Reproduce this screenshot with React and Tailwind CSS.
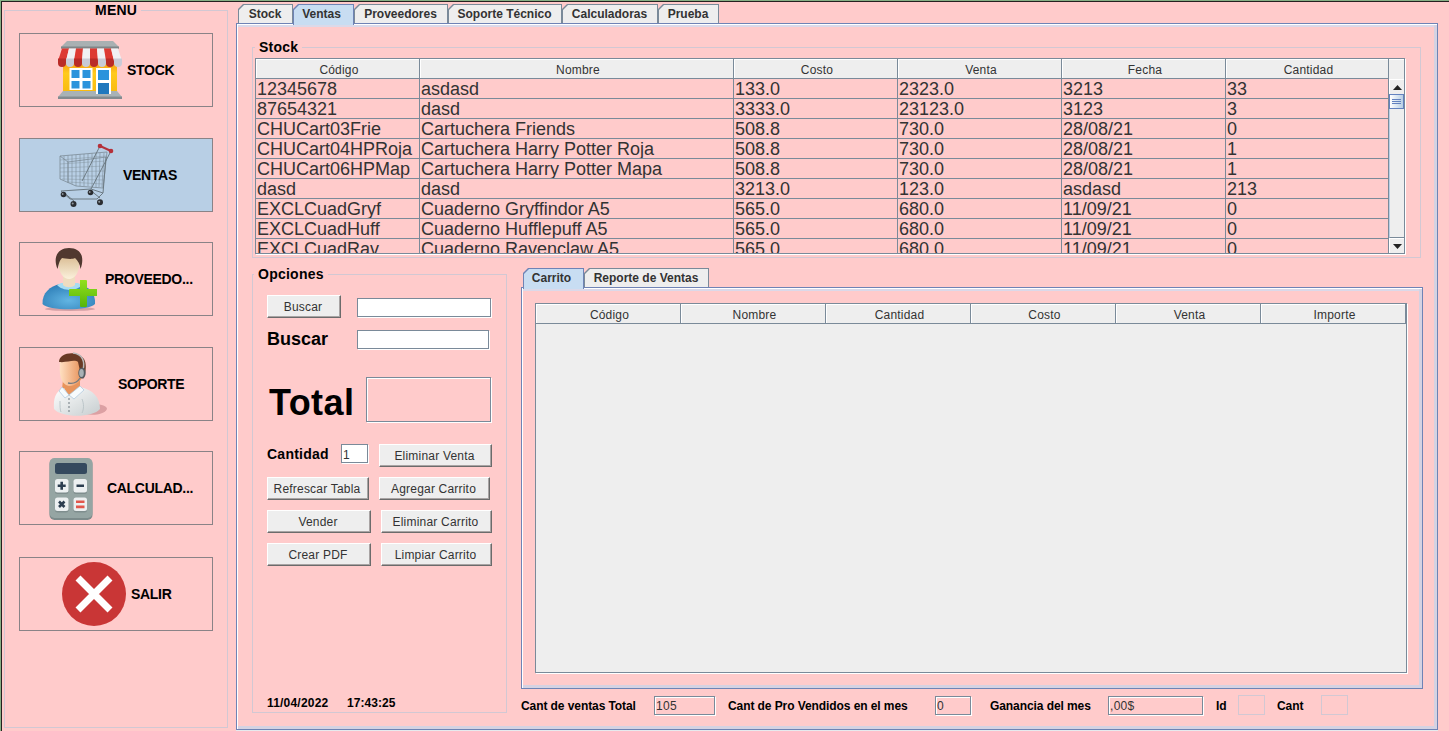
import React from "react";

const FONT = "font-['Liberation_Sans',Arial,sans-serif]";

function ShopIcon() {
  const stripes = ["#dd3a33", "#f1f1f4"];
  const caps = ["#b92b27", "#c9cbd6"];
  return (
    <svg width="64" height="64" viewBox="0 0 64 64">
      <defs>
        <linearGradient id="shopWall" x1="0" y1="0" x2="0" y2="1">
          <stop offset="0" stopColor="#f59a12" />
          <stop offset="0.35" stopColor="#ffca1c" />
          <stop offset="1" stopColor="#f8b90f" />
        </linearGradient>
      </defs>
      <rect x="5" y="24" width="54" height="32" fill="url(#shopWall)" />
      <path d="M5 53H59L64 59H0Z" fill="#a8b2b6" />
      <rect x="0" y="58.500" width="64" height="2.500" fill="#828b90" />
      <rect x="11.500" y="30" width="23" height="22" fill="#fff" />
      <g fill="#2b93dc">
        <rect x="13.500" y="32" width="8" height="8" />
        <rect x="24.500" y="32" width="8" height="8" />
        <rect x="13.500" y="43" width="8" height="7.500" />
        <rect x="24.500" y="43" width="8" height="7.500" />
      </g>
      <rect x="38" y="30" width="15" height="26" fill="#fff" />
      <rect x="40" y="32" width="11" height="10" fill="#2b93dc" />
      <rect x="40" y="45" width="11" height="11" fill="#1f78be" />
      <path d="M9 3H55L61 9H3Z" fill="#a9b0b2" />
      <rect x="3" y="8.500" width="58" height="2.200" fill="#7f8688" />
      {[0, 1, 2, 3, 4, 5, 6, 7].map((i) => {
        const t0 = 4 + i * 7;
        const b0 = i * 8;
        return (
          <g key={i}>
            <path d={`M${t0} 10.500H${t0 + 7}L${b0 + 8} 23H${b0}Z`} fill={stripes[i % 2]} />
            <path d={`M${b0} 20.500H${b0 + 8}V25A4 4 0 0 1 ${b0} 25Z`} fill={caps[i % 2]} />
          </g>
        );
      })}
    </svg>
  );
}

function CartIcon() {
  return (
    <svg width="64" height="64" viewBox="0 0 64 64" fill="none">
      <g stroke="#7b8a95" strokeWidth=".8">
        <path d="M6 13L53 9L49 45L22 43L6 36Z" />
        <path d="M6 17L52 13M6 21L52 18M6 25L51 23M6 29L51 28M6 33L50 33M8 36L50 37M14 39L49 41" strokeWidth=".4" />
        <path d="M10 13V37M14 12.500V39M18 12V41M22 12V43M26 11.500V43M30 11V43M34 11V43M38 10.500V44M42 10V44M46 10L45 44M50 10L48 44" strokeWidth=".6" />
        <path d="M6 13L14 19V40M14 19L52 14" strokeWidth=".8" />
      </g>
      <g stroke="#6c7a83" strokeWidth="1">
        <path d="M46 3L28 38M57 8L37 46" />
        <path d="M52 14L49 50L43 56H16L7 48L37 46L49 50" />
        <path d="M9 49L20 58M36 47L46 55" />
      </g>
      <path d="M45 2.500L57 8" stroke="#b3333c" strokeWidth="2" />
      <circle cx="46" cy="3" r="2.300" fill="#b5303a" />
      <circle cx="57" cy="8" r="2.300" fill="#b5303a" />
      <g fill="#2b2d31">
        <circle cx="9.500" cy="51.500" r="2.800" />
        <circle cx="36.500" cy="49.500" r="2.800" />
        <circle cx="19.500" cy="61" r="3" />
        <circle cx="46" cy="59.300" r="3" />
      </g>
      <g fill="#8f979d">
        <circle cx="8.700" cy="51" r=".9" />
        <circle cx="35.700" cy="49" r=".9" />
        <circle cx="18.700" cy="60.500" r="1" />
        <circle cx="45.200" cy="58.800" r="1" />
      </g>
    </svg>
  );
}

function UserAddIcon() {
  return (
    <svg width="64" height="64" viewBox="0 0 64 64">
      <defs>
        <radialGradient id="uaBody" cx=".5" cy=".65" r=".65">
          <stop offset="0" stopColor="#62b5e3" />
          <stop offset="1" stopColor="#2f7fb8" />
        </radialGradient>
        <linearGradient id="uaFace" x1="0" y1="0" x2="0" y2="1">
          <stop offset="0" stopColor="#d9bb92" />
          <stop offset="1" stopColor="#fbf1dc" />
        </linearGradient>
        <linearGradient id="uaPlus" x1="0" y1="0" x2="0" y2="1">
          <stop offset="0" stopColor="#93e01c" />
          <stop offset="1" stopColor="#55b40c" />
        </linearGradient>
      </defs>
      <ellipse cx="33" cy="62" rx="25" ry="2" fill="#d3a0a5" />
      <path d="M5.500 57C5 46 13 39 23 37H41C51 39 59 46 58 57C52 64 11 64 5.500 57Z" fill="url(#uaBody)" />
      <path d="M20 38C25 44 39 45 45 38L41 36H24Z" fill="#a8dcf2" />
      <path d="M26 28H38V38C35 41 29 41 26 38Z" fill="#efdcc0" />
      <path d="M21.500 14C21.500 27 27 32 32 32C37 32 42.500 27 42.500 14C40 7 24 7 21.500 14Z" fill="url(#uaFace)" />
      <path d="M20.500 22C15.500 10 21 1 32 1C44 1 48 10 43.500 22C43 17 41 14 38 11C34 13 27 11 25 11C22 14 22 17 20.500 22Z" fill="#50382f" />
      <path d="M43 33H49Q50 33 50 34V42H60V49H50V59Q50 60 49 60H44Q43 60 43 59V49H32V43Q32 42 33 42H43Z" fill="url(#uaPlus)" />
    </svg>
  );
}

function SupportIcon() {
  return (
    <svg width="64" height="64" viewBox="0 0 64 64">
      <defs>
        <linearGradient id="spFace" x1="0" y1="0" x2="1" y2="0">
          <stop offset="0" stopColor="#ffe0c2" />
          <stop offset="1" stopColor="#e58a50" />
        </linearGradient>
        <linearGradient id="spShirt" x1="0" y1="0" x2="1" y2="1">
          <stop offset="0" stopColor="#fff" />
          <stop offset="1" stopColor="#c6cdcf" />
        </linearGradient>
      </defs>
      <path d="M38 53C48 51 58 53 58 57C56 62 45 64 36 62Z" fill="#dca0a3" />
      <path d="M14 28H31V40L20 45L13 37Z" fill="#e8945c" />
      <path d="M5 57C4 45 8 38 15 36L20 44L31 35C44 38 51 45 51 57C44 66 12 66 5 57Z" fill="url(#spShirt)" />
      <path d="M13 35L20 43L16 46L10 39ZM31 34L20 43L25 47L35 38Z" fill="#f7fbfd" stroke="#aac6dc" strokeWidth=".7" />
      <path d="M33 47C35 52 35 57 33 61M11 49C11 54 11 58 12 60" stroke="#b4bfc3" strokeWidth=".8" fill="none" />
      <path d="M11 9C10 22 11 32 20 34C27 34 34 29 35 18L33 7C25 1 15 3 11 9Z" fill="url(#spFace)" />
      <path d="M10 10C10 0 29-2 35 7C38 12 37 21 34 27L31 19L29 10C25 7 18 11 10 10Z" fill="#693a25" />
      <path d="M24 1C34 2 36 10 34 18" stroke="#b9b9b9" strokeWidth="1.500" fill="none" />
      <ellipse cx="33" cy="21" rx="3.700" ry="5.500" fill="#555b60" />
      <ellipse cx="32.500" cy="21" rx="2.300" ry="4" fill="#a9b1b5" />
      <path d="M31 26C28 31 24 32 19 31" stroke="#747b80" strokeWidth="1.300" fill="none" />
      <g fill="#5d6972">
        <circle cx="20" cy="47" r=".8" />
        <circle cx="20" cy="51" r=".8" />
        <circle cx="20" cy="55" r=".8" />
        <circle cx="20" cy="59" r=".8" />
      </g>
    </svg>
  );
}

function CalculatorIcon() {
  return (
    <svg width="64" height="64" viewBox="0 0 64 64">
      <rect x="10.500" y="3" width="43" height="61" rx="5" fill="#7c8b8b" />
      <rect x="10.500" y="2" width="43" height="60" rx="5" fill="#95a5a3" />
      <rect x="16" y="7" width="32" height="11" rx="2.500" fill="#34495e" />
      <g fill="#7f8e8e">
        <rect x="16" y="25" width="13.500" height="13" rx="2.500" />
        <rect x="34.500" y="25" width="13.500" height="13" rx="2.500" />
        <rect x="16" y="43.500" width="13.500" height="13" rx="2.500" />
        <rect x="34.500" y="43.500" width="13.500" height="13" rx="2.500" />
      </g>
      <g fill="#ecf0f1">
        <rect x="16" y="23" width="13.500" height="13.500" rx="2.500" />
        <rect x="34.500" y="23" width="13.500" height="13.500" rx="2.500" />
        <rect x="16" y="41.500" width="13.500" height="13.500" rx="2.500" />
        <rect x="34.500" y="41.500" width="13.500" height="13.500" rx="2.500" />
      </g>
      <path d="M22.700 25.700V33.700M18.700 29.700H26.700M37.500 29.700H45M20 45.500L25.500 51M25.500 45.500L20 51" stroke="#2c3e50" strokeWidth="2.600" />
      <path d="M37 45.700H45.500M37 50.900H45.500" stroke="#e2574c" strokeWidth="2.600" />
    </svg>
  );
}

function CloseIcon() {
  return (
    <svg width="64" height="64" viewBox="0 0 64 64">
      <circle cx="32" cy="32" r="32" fill="#c93636" />
      <path d="M16 16L48 48M48 16L16 48" stroke="#fff" strokeWidth="7" />
    </svg>
  );
}

const MENU = [
  { label: "STOCK", Icon: ShopIcon, cls: "mt-[22px] pl-[38px] gap-[5px]" },
  { label: "VENTAS", Icon: CartIcon, cls: "mt-[31px] pl-[34px] gap-[5px] bg-[#b8cfe5]" },
  { label: "PROVEEDO...", Icon: UserAddIcon, cls: "mt-[30px] pl-[17px] gap-1" },
  { label: "SOPORTE", Icon: SupportIcon, cls: "mt-[31px] pl-[29px] gap-[5px]" },
  { label: "CALCULAD...", Icon: CalculatorIcon, cls: "mt-[30px] pl-[19px] gap-1" },
  { label: "SALIR", Icon: CloseIcon, cls: "mt-[32px] pl-[42px] gap-[5px]" },
];

function Tab({ label, width, active }) {
  const clip = "[clip-path:polygon(5px_0,100%_0,100%_100%,0_100%,0_5px)]";
  return (
    <div
      className={`${width} ${clip} shrink-0 px-px pt-px ${active ? "relative z-10 h-[21px] bg-[#6f83b5]" : "h-[19px] bg-[#7a8a99]"}`}
    >
      <div
        className={`${clip} flex h-full items-start justify-center pt-0.5 text-[12px] leading-[15px] font-bold whitespace-nowrap text-[#333] ${active ? "bg-[#c8ddf2] pr-1" : "bg-[#eee] pr-px"}`}
      >
        {label}
      </div>
    </div>
  );
}

function Title({ children, className }) {
  return (
    <div className={`w-fit bg-[#ffcbcb] px-1 text-[14px] leading-[16px] font-bold tracking-[.25px] ${className}`}>{children}</div>
  );
}

function Field({ children, className }) {
  return (
    <div
      className={`flex shrink-0 items-center border border-[#7a8a99] pt-0.5 pl-px text-[12px] leading-none tracking-[.3px] text-[#333] shadow-[1px_1px_0_#fff,inset_1px_1px_0_#fff] ${className}`}
    >
      {children}
    </div>
  );
}

function Button({ children, className }) {
  return (
    <button
      className={`flex h-[23px] shrink-0 items-center justify-center border border-t-white border-l-white border-r-[#6b6b6b] border-b-[#6b6b6b] bg-[#eee] pt-px pr-0.5 text-[12px] leading-none tracking-[.2px] whitespace-nowrap text-[#333] shadow-[inset_-1px_-1px_0_#a9a4a4] ${className}`}
    >
      {children}
    </button>
  );
}

const STOCK_COLS = "grid grid-cols-[164px_314px_164px_164px_164px_163px]";
const STOCK = [
  ["12345678", "asdasd", "133.0", "2323.0", "3213", "33"],
  ["87654321", "dasd", "3333.0", "23123.0", "3123", "3"],
  ["CHUCart03Frie", "Cartuchera Friends", "508.8", "730.0", "28/08/21", "0"],
  ["CHUCart04HPRoja", "Cartuchera Harry Potter Roja", "508.8", "730.0", "28/08/21", "1"],
  ["CHUCart06HPMap", "Cartuchera Harry Potter Mapa", "508.8", "730.0", "28/08/21", "1"],
  ["dasd", "dasd", "3213.0", "123.0", "asdasd", "213"],
  ["EXCLCuadGryf", "Cuaderno Gryffindor A5", "565.0", "680.0", "11/09/21", "0"],
  ["EXCLCuadHuff", "Cuaderno Hufflepuff A5", "565.0", "680.0", "11/09/21", "0"],
  ["EXCLCuadRav", "Cuaderno Ravenclaw A5", "565.0", "680.0", "11/09/21", "0"],
];

function HeaderCell({ children }) {
  return (
    <div className="flex h-5 items-center justify-center border-r border-b border-[#7a8a99] bg-[#eee] pt-0.5 pl-[3px] text-[12px] leading-none tracking-[.2px] text-[#333] shadow-[inset_1px_1px_0_#fff]">
      {children}
    </div>
  );
}

function ScrollBar() {
  return (
    <div className="flex w-[15px] flex-col bg-[#eee]">
      <div className="h-5 shadow-[inset_0_1px_0_#fff]" />
      <div className="flex h-[15px] items-center justify-center border-t border-l border-white">
        <svg width="9" height="5" viewBox="0 0 9 5"><path d="M0 5L4.500 0L9 5Z" fill="#222" /></svg>
      </div>
      <div className="flex h-[15px] flex-col items-center justify-center gap-px border border-[#6382bf] bg-linear-to-r from-white to-[#b8cfe5]">
        <div className="h-px w-[9px] bg-[#6382bf]" />
        <div className="h-px w-[9px] bg-[#6382bf]" />
        <div className="h-px w-[9px] bg-[#6382bf]" />
      </div>
      <div className="flex-1 border-b border-l border-b-[#7a8a99] border-l-[#b8cfe5]" />
      <div className="flex h-[15px] items-center justify-center border-t border-l border-white">
        <svg width="9" height="5" viewBox="0 0 9 5"><path d="M0 0L4.500 5L9 0Z" fill="#222" /></svg>
      </div>
    </div>
  );
}

function StockTable() {
  return (
    <div className="mt-[3px] ml-0.5 flex h-[196px] w-[1150px] overflow-hidden border border-[#7a8a99] shadow-[1px_1px_0_#fff]">
      <div className="h-[194px] w-[1133px] overflow-hidden">
        <div className={STOCK_COLS}>
          {["Código", "Nombre", "Costo", "Venta", "Fecha", "Cantidad"].map((h) => (
            <HeaderCell key={h}>{h}</HeaderCell>
          ))}
        </div>
        {STOCK.map((row) => (
          <div key={row[0]} className={STOCK_COLS}>
            {row.map((cell, i) => (
              <div key={i} className="h-5 overflow-hidden border-r border-b border-[#7a8a99] pl-px text-[18px] leading-[20px] whitespace-nowrap text-[#333]">
                {cell}
              </div>
            ))}
          </div>
        ))}
      </div>
      <ScrollBar />
    </div>
  );
}

function Options() {
  return (
    <section className="h-[439px] w-[255px] shrink-0 border border-[#d2c8d3]">
      <Title className="-mt-[9px] ml-px">Opciones</Title>
      <div className="pl-[14px]">
        <div className="mt-[13px] flex items-start">
          <Button className="w-[74px]">Buscar</Button>
          <Field className="mt-[3px] ml-4 h-[19px] w-[134px] bg-white" />
        </div>
        <div className="mt-[12px] flex h-[19px] items-center">
          <div className="w-[90px] pb-0.5 text-[18px] leading-none font-bold">Buscar</div>
          <Field className="h-[19px] w-[132px] bg-white" />
        </div>
        <div className="mt-[28px] flex h-[45px] items-center">
          <div className="w-[99px] pt-[7px] pl-[2px] text-[36px] leading-none font-bold tracking-[.4px]">Total</div>
          <Field className="h-[45px] w-[125px]" />
        </div>
        <div className="mt-[22px] flex">
          <div className="w-[74px] pt-[2px] text-[14px] leading-[16px] font-bold tracking-[.25px]">Cantidad</div>
          <Field className="h-[19px] w-[27px] bg-white">1</Field>
          <Button className="ml-[11px] w-[113px]">Eliminar Venta</Button>
        </div>
        <div className="mt-[10px] flex gap-[10px]">
          <Button className="w-[102px]">Refrescar Tabla</Button>
          <Button className="w-[111px]">Agregar Carrito</Button>
        </div>
        <div className="mt-[10px] flex gap-[10px]">
          <Button className="w-[104px]">Vender</Button>
          <Button className="w-[111px]">Eliminar Carrito</Button>
        </div>
        <div className="mt-[10px] flex gap-[10px]">
          <Button className="w-[104px]">Crear PDF</Button>
          <Button className="w-[111px]">Limpiar Carrito</Button>
        </div>
        <div className="mt-[131px] flex text-[12px] leading-none font-bold tracking-[.2px]">
          <span className="w-[80px]">11/04/2022</span>
          <span className="tracking-[.05px]">17:43:25</span>
        </div>
      </div>
    </section>
  );
}

function CartPanel() {
  return (
    <div>
      <div className="flex h-[19px] pl-0.5">
        <Tab label="Carrito" width="w-[61px]" active />
        <Tab label="Reporte de Ventas" width="w-[125px]" />
      </div>
      <div className="h-[402px] w-[902px] border border-[#6f83b5] pt-[15px] pl-[13px] shadow-[inset_1px_1px_0_#fff,inset_-3px_-3px_0_#d5d2e2,inset_0_3px_0_#dbd9e9]">
        <div className="h-[370px] w-[872px] border border-[#7a8a99] bg-[#eee] shadow-[1px_1px_0_#fff]">
          <div className="grid grid-cols-6">
            {["Código", "Nombre", "Cantidad", "Costo", "Venta", "Importe"].map((h) => (
              <HeaderCell key={h}>{h}</HeaderCell>
            ))}
          </div>
        </div>
      </div>
    </div>
  );
}

function Totals() {
  return (
    <div className="mt-[6px] flex h-5 items-center text-[12px] leading-none font-bold tracking-[-.08px] whitespace-nowrap">
      <span className="w-[133px] pt-px">Cant de ventas Total</span>
      <Field className="h-[19px] w-[61px] font-normal">105</Field>
      <span className="ml-[13px] w-[207px] pt-px">Cant de Pro Vendidos en el mes</span>
      <Field className="h-[19px] w-[36px] font-normal">0</Field>
      <span className="ml-[19px] w-[118px] pt-px">Ganancia del mes</span>
      <Field className="h-[19px] w-[95px] font-normal">,00$</Field>
      <span className="ml-[13px] w-[22px] pt-px">Id</span>
      <div className="h-5 w-[27px] border border-[#d2c8d3]" />
      <span className="ml-3 w-[44px] pt-px">Cant</span>
      <div className="h-5 w-[27px] border border-[#d2c8d3]" />
    </div>
  );
}

export default function App() {
  return (
    <div className={`${FONT} h-[731px] w-[1449px] overflow-hidden border-t border-l border-[#86b086] bg-[#ffcbcb] text-black`}>
      <div className="flex h-full border-t border-l border-[#262020]">
        <aside className="mt-2 ml-0.5 h-[718px] w-[224px] shrink-0 border border-[#d2c8d3]">
          <Title className="-mt-[9px] ml-[86px]">MENU</Title>
          <nav className="-mt-[7px] flex flex-col pl-[14px]">
            {MENU.map(({ label, Icon, cls }) => (
              <button
                key={label}
                className={`flex h-[74px] w-[194px] items-center border border-[#8a8387] text-[14px] leading-none font-bold tracking-[-.3px] ${cls}`}
              >
                <Icon />
                {label}
              </button>
            ))}
          </nav>
        </aside>

        <main className="mt-0.5 ml-2">
          <div className="flex h-[19px] pl-0.5">
            <Tab label="Stock" width="w-[55px]" />
            <Tab label="Ventas" width="w-[61px]" active />
            <Tab label="Proveedores" width="w-[94px]" />
            <Tab label="Soporte Técnico" width="w-[114px]" />
            <Tab label="Calculadoras" width="w-[96px]" />
            <Tab label="Prueba" width="w-[61px]" />
          </div>
          <div className="h-[707px] w-[1202px] border border-[#6f83b5] pt-[23px] pl-[15px] shadow-[0_1px_0_#e6eaee,inset_1px_1px_0_#fff,inset_-3px_-3px_0_#d5d2e2,inset_0_3px_0_#dbd9e9]">
            <section className="h-[211px] w-[1169px] border border-[#d2c8d3]">
              <Title className="-mt-[9px] ml-0.5">Stock</Title>
              <StockTable />
            </section>
            <div className="flex">
              <div className="pt-4">
                <Options />
              </div>
              <div className="ml-[14px] pt-[10px]">
                <CartPanel />
                <Totals />
              </div>
            </div>
          </div>
        </main>
      </div>
    </div>
  );
}
